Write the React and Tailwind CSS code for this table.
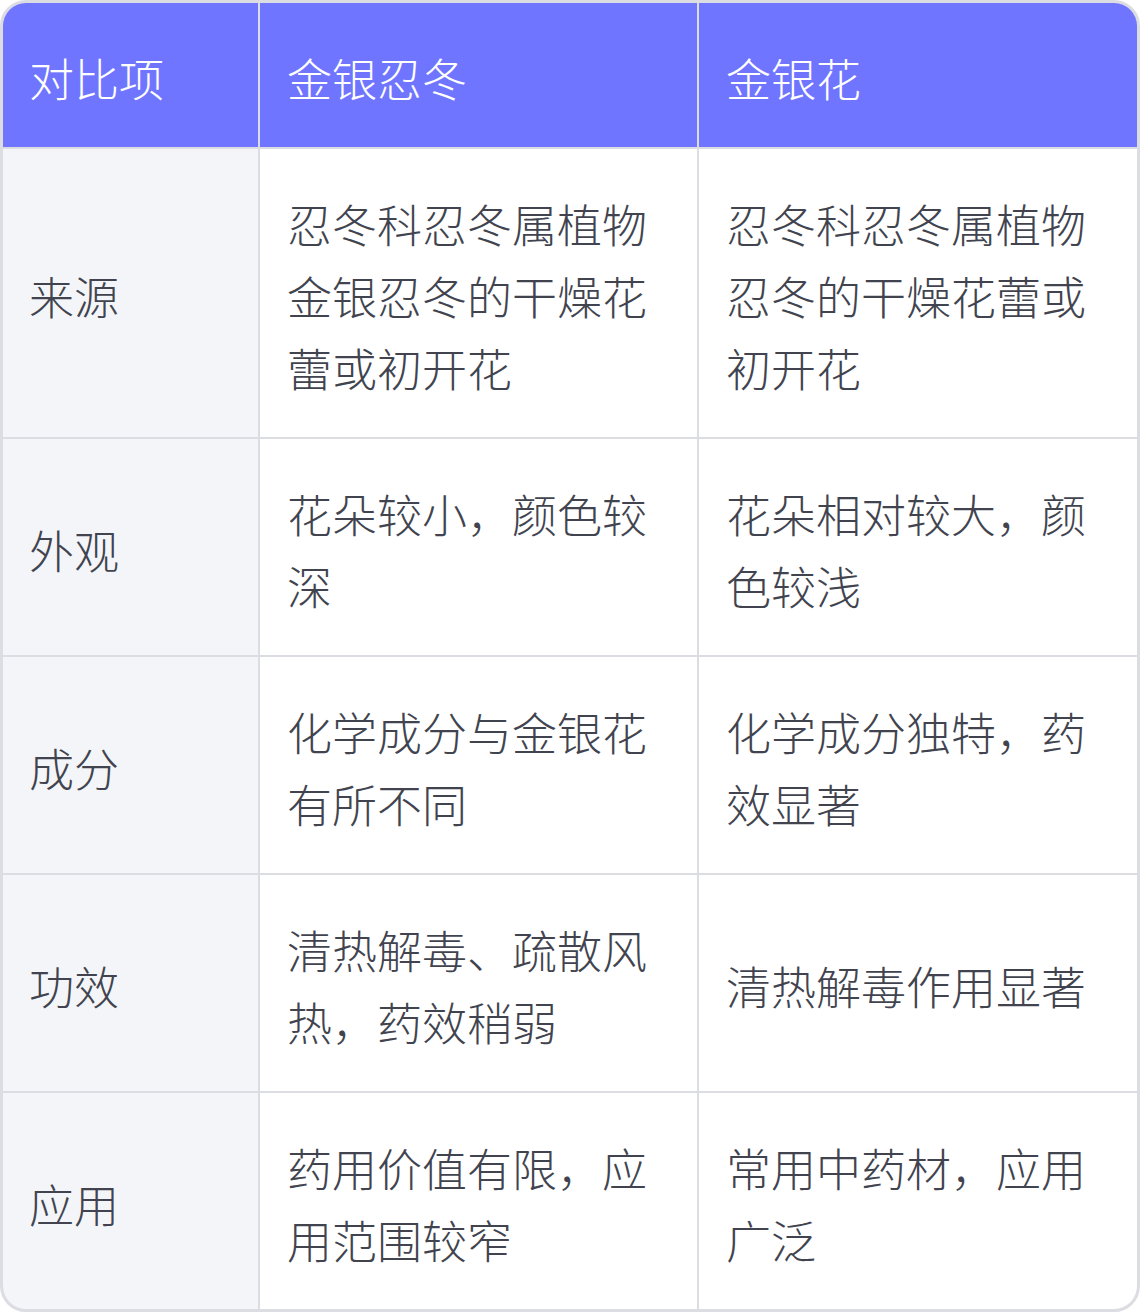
import React from "react";

const rows = [
  ["来源", "忍冬科忍冬属植物金银忍冬的干燥花蕾或初开花", "忍冬科忍冬属植物忍冬的干燥花蕾或初开花"],
  ["外观", "花朵较小，颜色较深", "花朵相对较大，颜色较浅"],
  ["成分", "化学成分与金银花有所不同", "化学成分独特，药效显著"],
  ["功效", "清热解毒、疏散风热，药效稍弱", "清热解毒作用显著"],
  ["应用", "药用价值有限，应用范围较窄", "常用中药材，应用广泛"],
];

export default function App() {
  return (
    <div
      className="w-[1140px] h-[1312px] bg-white"
      style={{ fontFamily: '"Noto Sans CJK SC", "Noto Sans", sans-serif' }}
    >
      <div className="w-full h-full rounded-[26px] border-[3px] border-[#dcdde3] overflow-hidden bg-[#dcdde3] grid grid-cols-[255px_437px_438px] grid-rows-[144px_288px_216px_216px_216px_216px] gap-[2px] text-[45px] leading-[72px] font-light">
        <div className="bg-[#7075ff] text-white flex items-center px-[26px] pt-[6px]">对比项</div>
        <div className="bg-[#7075ff] text-white flex items-center px-[27px] pt-[6px]">金银忍冬</div>
        <div className="bg-[#7075ff] text-white flex items-center px-[27px] pt-[6px]">金银花</div>
        {rows.map((r, i) => (
          <React.Fragment key={i}>
            <div className="bg-[#f4f5f9] text-[#41444f] flex items-center px-[26px] pt-[6px]">{r[0]}</div>
            <div className="bg-white text-[#41444f] flex items-center px-[27px] pt-[6px]">
              <span>{r[1]}</span>
            </div>
            <div className="bg-white text-[#41444f] flex items-center px-[27px] pt-[6px]">
              <span>{r[2]}</span>
            </div>
          </React.Fragment>
        ))}
      </div>
    </div>
  );
}
